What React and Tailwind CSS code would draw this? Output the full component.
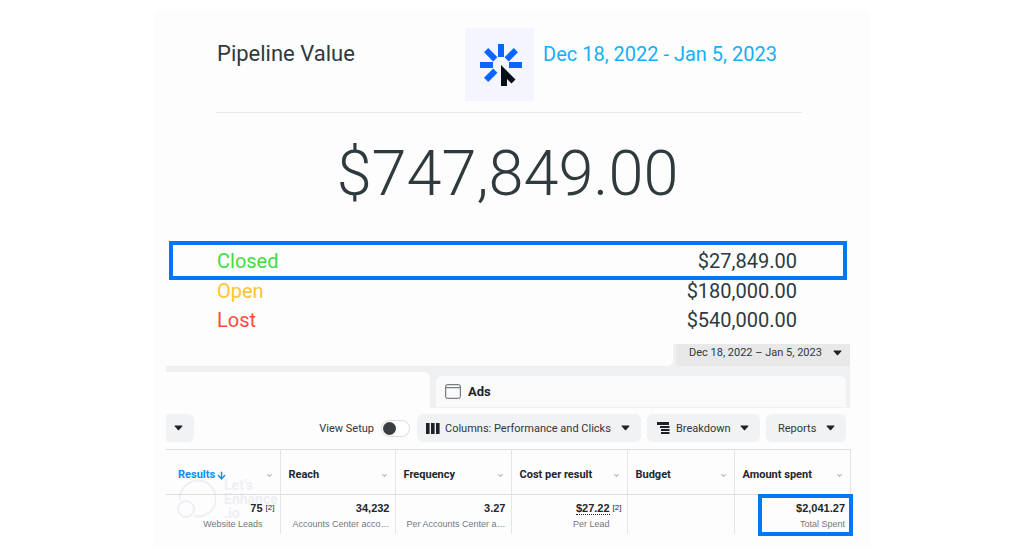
import { ArrowDown, ChevronDown } from "lucide-react";

const stages = [
  { name: "Open", amount: "$180,000.00", tone: "text-[#ffc42e]" },
  { name: "Lost", amount: "$540,000.00", tone: "text-[#fa4b40]" },
];

const columns = [
  { name: "Results", width: "w-[114px]", sorted: true, value: "75", note: true, detail: "Website Leads" },
  { name: "Reach", width: "w-[115px]", value: "34,232", detail: "Accounts Center acco…" },
  { name: "Frequency", width: "w-[116px]", value: "3.27", detail: "Per Accounts Center a…" },
  { name: "Cost per result", width: "w-[116px]", value: "$27.22", note: true, dotted: true, detail: "Per Lead" },
  { name: "Budget", width: "w-[107px]" },
  { name: "Amount spent", width: "w-[116px]", value: "$2,041.27", detail: "Total Spent", highlighted: true },
];

function Caret() {
  return (
    <svg width="9" height="6" viewBox="0 0 9 6" className="shrink-0" aria-hidden="true">
      <path d="M1 .5h7q.8 0 .3.7L5.1 5q-.6.6-1.2 0L.7 1.200Q.2.5 1 .5Z" fill="#1c2228" />
    </svg>
  );
}

function ClickLogo() {
  return (
    <div className="flex h-[73px] w-[69px] shrink-0 items-center justify-center bg-[#f4f5ff] pl-[3px]">
      <svg width="42" height="42" viewBox="0 0 42 42" role="img" aria-label="Click">
        <g fill="#0866ff">
          <rect x="18" y="0" width="6" height="13" />
          <rect x="0" y="18" width="13" height="6" />
          <rect x="29" y="18" width="13" height="6" />
          <rect x="18" y="0" width="6" height="13" transform="rotate(45 21 21)" />
          <rect x="18" y="0" width="6" height="13" transform="rotate(-45 21 21)" />
          <rect x="18" y="0" width="6" height="13" transform="rotate(-135 21 21)" />
        </g>
        <path d="M21 21 35.500 35.500 31.500 39.500 27 35V42H21Z" fill="#050f19" />
      </svg>
    </div>
  );
}

function Pipeline() {
  return (
    <section className="text-[#2f3a3e]">
      <header className="ml-[62px] mr-[68px] flex items-start border-b border-[#e8e8e8] pb-[11px] pt-[18px]">
        <h1 className="flex-1 pl-px pt-[12px] text-[22px] leading-7">Pipeline Value</h1>
        <ClickLogo />
        <p className="w-[268px] pl-[9px] pt-[12px] text-[20px] leading-7 text-[#14b0f5]">Dec 18, 2022 - Jan 5, 2023</p>
      </header>
      <p className="pr-[9px] pt-[25px] text-center text-[63px] font-light leading-[72px]">$747,849.00</p>
      <dl className="mt-[31px] flex flex-col gap-[7px] text-[20px] leading-[22px]">
        <div className="-mb-[7px] ml-[15px] mr-[23px] flex h-[39px] items-center justify-between border-4 border-[#0577f5] pl-[44px] pr-[46px]">
          <dt className="text-[#3fdc43]">Closed</dt>
          <dd>$27,849.00</dd>
        </div>
        {stages.map((s) => (
          <div key={s.name} className="ml-[63px] mr-[73px] flex justify-between">
            <dt className={s.tone}>{s.name}</dt>
            <dd>{s.amount}</dd>
          </div>
        ))}
      </dl>
    </section>
  );
}

function TabBar() {
  return (
    <div className="bg-[#eff0f1]">
      <div className="flex h-[22px]">
        <div className="flex-1 rounded-br-md bg-[#fdfdfd]" />
        <button className="ml-[3px] flex w-[174px] items-start justify-between bg-[#e8e8e8] pl-[13px] pr-[8px] pt-[2px] text-[11px] leading-[14px] text-[#30363b]">
          Dec 18, 2022 – Jan 5, 2023
          <span className="pt-[4px]"><Caret /></span>
        </button>
      </div>
      <div className="flex h-[42px] pr-[4px] pt-[6px]">
        <div className="w-[264px] rounded-tr-md bg-[#fdfdfd]" />
        <button className="ml-[6px] mt-[4px] flex h-[31px] flex-1 items-center gap-[7px] rounded-t-md bg-[#fafafa] pl-[9px] text-[13px] font-bold text-[#1c2228]">
          <svg width="16" height="15" viewBox="0 0 16 15" fill="none" stroke="#596068" aria-hidden="true">
            <rect x=".7" y=".7" width="14.600" height="13.600" rx="1.500" />
            <path d="M1 3.700h14" />
          </svg>
          Ads
        </button>
      </div>
    </div>
  );
}

function Toolbar() {
  return (
    <div className="flex h-[28px] items-stretch pr-[4px] text-[11px] leading-[15px] text-[#30363b]">
      <button aria-label="More" className="flex w-[28px] items-center justify-center rounded-r-md bg-[#f1f2f3] pr-[4px]">
        <Caret />
      </button>
      <label className="ml-auto flex items-center gap-[7px]">
        <span className="pt-px">View Setup</span>
        <input
          type="checkbox"
          role="switch"
          className="h-[17px] w-[29px] appearance-none rounded-full border border-[#dadcde] bg-white before:ml-px before:mt-px before:block before:h-[13px] before:w-[13px] before:rounded-full before:bg-[#3a3e42] before:content-[''] checked:before:ml-[13px]"
        />
      </label>
      <button className="ml-[7px] flex w-[224px] items-center rounded-md bg-[#f1f2f3] pl-[9px] pr-[11px]">
        <svg width="14" height="11" viewBox="0 0 14 11" fill="#1c2228" aria-hidden="true">
          <path d="M0 0h3.600v11H0zM5 0h3.600v11H5zM10 0h3.600v11H10z" />
        </svg>
        <span className="ml-[5px] mr-auto pt-px">Columns: Performance and Clicks</span>
        <Caret />
      </button>
      <button className="ml-[6px] flex w-[113px] items-center rounded-md bg-[#f1f2f3] pl-[10px] pr-[11px]">
        <svg width="13" height="12" viewBox="0 0 13 12" fill="#1c2228" aria-hidden="true">
          <path d="M0 0h12v3H0zM3 4h9.500v2H3zM4 7h8.500v2H4zM4 10h8.500v2H4z" />
        </svg>
        <span className="ml-[6px] mr-auto pt-px">Breakdown</span>
        <Caret />
      </button>
      <button className="ml-[6px] flex w-[80px] items-center justify-between rounded-md bg-[#f1f2f3] pl-[12px] pr-[11px]">
        <span className="pt-px">Reports</span>
        <Caret />
      </button>
    </div>
  );
}

function Watermark() {
  return (
    <div aria-hidden="true" className="pointer-events-none absolute left-[11px] top-[29px] flex items-start gap-[8px] text-[#eeeff4]">
      <svg width="39" height="40" viewBox="0 0 39 40" fill="none" stroke="currentColor" strokeWidth="2">
        <path d="M3 22A18 18 0 1 1 17 38" />
        <circle cx="9" cy="31" r="8" />
      </svg>
      <span className="text-[14px] font-bold leading-[14px]">Let’s<br />Enhance<br />.io</span>
    </div>
  );
}

function Metrics() {
  return (
    <div className="relative">
      <Watermark />
      <table className="relative w-full table-fixed border-collapse text-[11px] text-[#20272d]">
        <thead>
          <tr className="h-[45px] border-y border-[#dddcdf]">
            {columns.map((c) => (
              <th key={c.name} scope="col" className={`${c.width} border-r border-[#e8e2e5] p-0 pl-[8px] pr-[7px] text-left font-bold first:pl-[12px]`}>
                <div className="flex items-center pt-[7px]">
                  <span className={c.sorted ? "text-[#0a8cf5]" : ""}>{c.name}</span>
                  {c.sorted && <ArrowDown size={11} strokeWidth={3} className="ml-px text-[#0a8cf5]" />}
                  <ChevronDown size={7} strokeWidth={4} className="ml-auto text-[#b4b9be]" />
                </div>
              </th>
            ))}
          </tr>
        </thead>
        <tbody>
          <tr className="h-[39px]">
            {columns.map((c) => (
              <td key={c.name} className="relative border-r border-[#e8e2e5] p-0 pl-[8px] pr-[5px] text-right align-top last:border-r-0">
                {c.value && (
                  <>
                    <div className="pt-[5px] font-['Liberation_Sans',sans-serif] text-[11px] font-bold leading-[16px]">
                      <span className={c.dotted ? "border-b border-dotted border-[#20272d]" : ""}>{c.value}</span>
                      {c.note && <span className="pl-[3px] align-[2px] text-[8px] font-normal leading-none">[2]</span>}
                    </div>
                    <div className={`whitespace-nowrap font-['Liberation_Sans',sans-serif] text-[9px] leading-[16px] text-[#73797f] ${c.note ? "pr-[12px]" : ""}`}>{c.detail}</div>
                  </>
                )}
                {c.highlighted && <div className="absolute -right-[3px] -top-px h-[42px] w-[95px] border-4 border-[#0577f5]" />}
              </td>
            ))}
          </tr>
        </tbody>
      </table>
    </div>
  );
}

export default function App() {
  return (
    <main className="min-h-screen bg-white px-4 py-[10px] font-['Roboto',sans-serif]">
      <div className="mx-auto max-w-[716px] bg-[#fdfdfd] pb-[12px]">
        <Pipeline />
        <section className="ml-[12px] mr-[20px] mt-[13px]">
          <TabBar />
          <div className="pb-[7px] pt-[6px]">
            <Toolbar />
          </div>
          <Metrics />
        </section>
      </div>
    </main>
  );
}
